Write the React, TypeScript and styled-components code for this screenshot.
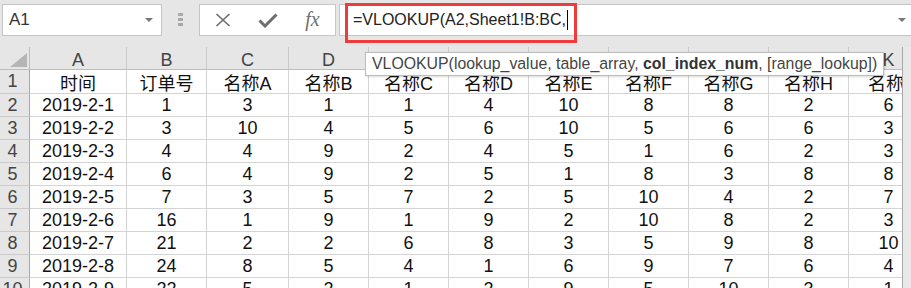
import styled, { createGlobalStyle } from 'styled-components';

const GlobalStyle = createGlobalStyle`
  html, body {
    margin: 0;
    padding: 0;
    background: #e6e6e6;
  }
`;

const columns = ['A', 'B', 'C', 'D', 'E', 'F', 'G', 'H', 'I', 'J', 'K'];
const widths = [97, 80, 82, 80, 80, 80, 80, 80, 80, 80, 80];

const data = [
  ['时间', '订单号', '名称A', '名称B', '名称C', '名称D', '名称E', '名称F', '名称G', '名称H', '名称I'],
  ['2019-2-1', '1', '3', '1', '1', '4', '10', '8', '8', '2', '6'],
  ['2019-2-2', '3', '10', '4', '5', '6', '10', '5', '6', '6', '3'],
  ['2019-2-3', '4', '4', '9', '2', '4', '5', '1', '6', '2', '3'],
  ['2019-2-4', '6', '4', '9', '2', '5', '1', '8', '3', '8', '8'],
  ['2019-2-5', '7', '3', '5', '7', '2', '5', '10', '4', '2', '7'],
  ['2019-2-6', '16', '1', '9', '1', '9', '2', '10', '8', '2', '3'],
  ['2019-2-7', '21', '2', '2', '6', '8', '3', '5', '9', '8', '10'],
  ['2019-2-8', '24', '8', '5', '4', '1', '6', '9', '7', '6', '4'],
  ['2019-2-9', '22', '5', '2', '1', '2', '9', '5', '10', '3', '1'],
];

const App = () => {
  return (
    <>
      <GlobalStyle />
      <Page>
        <Toolbar>
          <NameBox>
            <span>A1</span>
            <SmallCaret />
          </NameBox>
          <Grip>
            <i />
            <i />
            <i />
          </Grip>
          <ButtonBox>
            <IconSlot>
              <svg width="16" height="14" viewBox="0 0 16 14">
                <path d="M1.5 1 L14.5 13 M14.5 1 L1.5 13" stroke="#6e6e6e" strokeWidth="1.7" fill="none" />
              </svg>
            </IconSlot>
            <IconSlot>
              <svg width="20" height="15" viewBox="0 0 20 15">
                <path d="M1.5 7.5 L7 13 L18.5 1.5" stroke="#6e6e6e" strokeWidth="3" fill="none" />
              </svg>
            </IconSlot>
            <IconSlot>
              <Fx>fx</Fx>
            </IconSlot>
          </ButtonBox>
          <FormulaBar>
            <FormulaText>=VLOOKUP(A2,Sheet1!B:BC,</FormulaText>
            <Cursor />
            <BarCaret />
          </FormulaBar>
        </Toolbar>

        <Sheet>
          <Grid>
            <Row $h={23}>
              <Corner>
                <SelectAll />
              </Corner>
              {columns.map((c, i) => (
                <ColHead key={c} $w={widths[i]}>
                  {c}
                </ColHead>
              ))}
            </Row>
            {data.map((row, r) => (
              <Row key={r} $h={r === 0 ? 24 : 23}>
                <RowHead>{r + 1}</RowHead>
                {row.map((v, i) => (
                  <Cell key={i} $w={widths[i]}>
                    {v}
                  </Cell>
                ))}
              </Row>
            ))}
          </Grid>
          <ScrollEdge />
        </Sheet>

        <Highlight />
        <Tooltip>
          VLOOKUP(lookup_value, table_array, <b>col_index_num</b>, [range_lookup])
        </Tooltip>
      </Page>
    </>
  );
};

const Page = styled.div`
  position: relative;
  width: 911px;
  height: 288px;
  overflow: hidden;
  background: #e6e6e6;
  display: flex;
  flex-direction: column;
  font-family: 'Liberation Sans', 'Noto Sans CJK SC', sans-serif;
`;

const Toolbar = styled.div`
  height: 47px;
  flex-shrink: 0;
  box-sizing: border-box;
  padding: 4px 0 0 2px;
  display: flex;
  align-items: flex-start;

  & > * {
    flex-shrink: 0;
  }
`;

const NameBox = styled.div`
  width: 160px;
  height: 32px;
  box-sizing: border-box;
  background: #fff;
  border: 1px solid #c6c6c6;
  display: flex;
  align-items: center;
  justify-content: space-between;
  padding: 0 8px 0 6px;
  font-size: 17px;
  color: #333;
`;

const SmallCaret = styled.span`
  width: 0;
  height: 0;
  border-left: 4px solid transparent;
  border-right: 4px solid transparent;
  border-top: 4px solid #777;
`;

const Grip = styled.div`
  width: 5px;
  margin: 9px 16px 0 16px;
  display: flex;
  flex-direction: column;
  gap: 2px;

  i {
    display: block;
    width: 5px;
    height: 3px;
    background: #a8a8a8;
  }
`;

const ButtonBox = styled.div`
  width: 137px;
  height: 32px;
  box-sizing: border-box;
  background: #fff;
  border: 1px solid #c6c6c6;
  display: grid;
  grid-template-columns: repeat(3, 45px);
  align-items: center;
`;

const IconSlot = styled.div`
  display: flex;
  align-items: center;
  justify-content: center;
`;

const Fx = styled.span`
  font-family: 'Liberation Serif', serif;
  font-style: italic;
  font-size: 20px;
  color: #6e6e6e;
  line-height: 1;
  margin-top: -2px;
`;

const FormulaBar = styled.div`
  width: 580px;
  height: 32px;
  margin-left: 3px;
  box-sizing: border-box;
  background: #fff;
  border: 1px solid #c6c6c6;
  display: flex;
  align-items: center;
  padding: 0 12px 0 13px;
`;

const FormulaText = styled.span`
  font-size: 16px;
  color: #222;
  white-space: nowrap;
`;

const Cursor = styled.span`
  width: 1px;
  height: 20px;
  margin-left: 1px;
  background: #000;
`;

const BarCaret = styled(SmallCaret)`
  margin-left: auto;
`;

const Sheet = styled.div`
  flex: 1;
  display: flex;
  min-height: 0;
`;

const Grid = styled.div`
  width: 902px;
  overflow: hidden;
  display: flex;
  flex-direction: column;
`;

const Row = styled.div<{ $h: number }>`
  display: flex;
  height: ${(p) => p.$h}px;
  flex-shrink: 0;
`;

const Corner = styled.div`
  width: 30px;
  flex-shrink: 0;
  box-sizing: border-box;
  background: #e6e6e6;
  border-right: 1px solid #bdbdbd;
  border-bottom: 1px solid #bdbdbd;
  display: flex;
  align-items: flex-end;
  justify-content: flex-end;
  padding: 0 2px 2px 0;
`;

const SelectAll = styled.div`
  width: 17px;
  height: 14px;
  background: #b5b5b5;
  clip-path: polygon(100% 0, 100% 100%, 0 100%);
`;

const ColHead = styled.div<{ $w: number }>`
  width: ${(p) => p.$w}px;
  flex-shrink: 0;
  box-sizing: border-box;
  background: #e6e6e6;
  border-right: 1px solid #cacaca;
  border-bottom: 1px solid #bdbdbd;
  display: flex;
  align-items: center;
  justify-content: center;
  padding-top: 5px;
  font-size: 18px;
  color: #444;
`;

const RowHead = styled.div`
  width: 30px;
  flex-shrink: 0;
  box-sizing: border-box;
  background: #e6e6e6;
  border-right: 1px solid #a8a8a8;
  border-bottom: 1px solid #cacaca;
  display: flex;
  align-items: center;
  justify-content: center;
  padding-right: 4px;
  font-size: 18px;
  color: #444;
`;

const Cell = styled.div<{ $w: number }>`
  width: ${(p) => p.$w}px;
  flex-shrink: 0;
  box-sizing: border-box;
  background: #fff;
  border-right: 1px solid #d4d4d4;
  border-bottom: 1px solid #d4d4d4;
  display: flex;
  align-items: center;
  justify-content: center;
  font-size: 18px;
  color: #111;
  white-space: nowrap;
`;

const ScrollEdge = styled.div`
  flex: 1;
  background: #e9e9e9;
  border-left: 1px solid #a8a8a8;
`;

const Highlight = styled.div`
  position: absolute;
  left: 345px;
  top: 3px;
  width: 232px;
  height: 40px;
  box-sizing: border-box;
  border: 3px solid #ee3b3b;
  pointer-events: none;
`;

const Tooltip = styled.div`
  position: absolute;
  left: 365px;
  top: 52px;
  height: 24px;
  box-sizing: border-box;
  padding: 0 6px;
  background: #fff;
  border: 1px solid #bcbcbc;
  box-shadow: 1px 1px 2px rgba(0, 0, 0, 0.15);
  display: flex;
  align-items: center;
  white-space: pre;
  font-size: 15.85px;
  color: #444;

  b {
    font-weight: bold;
    color: #333;
  }
`;

export default App;
